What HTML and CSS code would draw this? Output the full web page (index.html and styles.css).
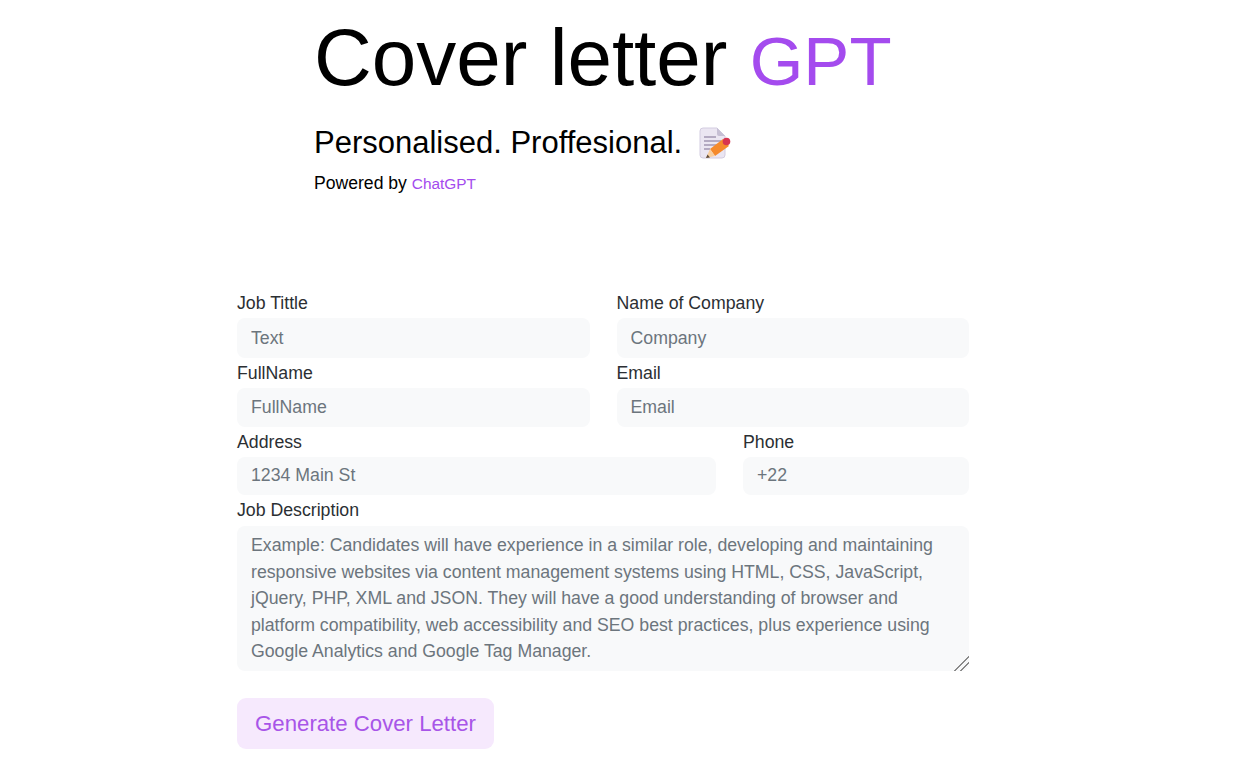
FILE: index.html
```html
<!DOCTYPE html>
<html lang="en">
<head>
    <meta charset="UTF-8">
    <meta name="viewport" content="width=device-width, initial-scale=1.0">
    <title>Cover letter GPT</title>
    <link rel="stylesheet" href="styles.css">
</head>
<body>
    <!-- Header -->
    <header class="hero">
        <h1>Cover letter <span class="accent">GPT</span></h1>
        <h2>Personalised. Proffesional.
            <svg class="memo" viewBox="0 0 32 32" width="32" height="32" aria-hidden="true">
                <path d="M1 4a3 3 0 0 1 3-3h14l8 8v19a3 3 0 0 1-3 3H4a3 3 0 0 1-3-3z" fill="#ebe6f2" stroke="#d3cce0" stroke-width="1"/>
                <path d="M18 1l8 8h-6a2 2 0 0 1-2-2z" fill="#c6bfd4"/>
                <path d="M5 10h12M5 14h17M5 18h13M5 22h6" stroke="#a297b3" stroke-width="1.3"/>
                <path d="M11 22L24 12l6 7-14 10z" fill="#f58a2c"/>
                <path d="M7 31l4-9 5 7z" fill="#f9cf9f"/>
                <path d="M7 31l1.5-3.500 2.500 3z" fill="#5d4a3a"/>
                <circle cx="27.500" cy="14.500" r="3.800" fill="#d8344f"/>
            </svg>
        </h2>
        <p class="powered">Powered by <span class="accent small">ChatGPT</span></p>
    </header>

    <!-- Form -->
    <form class="letter-form">
        <div class="form-row">
            <div class="field half">
                <label for="job">Job Tittle</label>
                <input type="text" id="job" class="tall" placeholder="Text">
            </div>
            <div class="field half">
                <label for="company">Name of Company</label>
                <input type="text" id="company" class="tall" placeholder="Company">
            </div>
        </div>
        <div class="form-row">
            <div class="field half">
                <label for="fullname">FullName</label>
                <input type="text" id="fullname" class="tall" placeholder="FullName">
            </div>
            <div class="field half">
                <label for="email">Email</label>
                <input type="text" id="email" class="tall" placeholder="Email">
            </div>
        </div>
        <div class="form-row">
            <div class="field wide">
                <label for="address">Address</label>
                <input type="text" id="address" class="short" placeholder="1234 Main St">
            </div>
            <div class="field narrow">
                <label for="phone">Phone</label>
                <input type="text" id="phone" class="short" placeholder="+22">
            </div>
        </div>
        <div class="field description">
            <label for="description">Job Description</label>
            <textarea id="description" placeholder="Example: Candidates will have experience in a similar role, developing and maintaining responsive websites via content management systems using HTML, CSS, JavaScript, jQuery, PHP, XML and JSON. They will have a good understanding of browser and platform compatibility, web accessibility and SEO best practices, plus experience using Google Analytics and Google Tag Manager."></textarea>
        </div>
        <button type="button" class="generate">Generate Cover Letter</button>
    </form>
</body>
</html>
```

FILE: styles.css
```css
* {
    margin: 0;
    padding: 0;
    box-sizing: border-box;
    font-family: "Liberation Sans", Arial, sans-serif;
}

body {
    background-color: #fff;
    color: #212529;
    height: 768px;
    overflow: hidden;
}

.hero {
    padding: 12px 0 0 314px;
    color: #000;
}

.hero h1 {
    font-size: 80px;
    font-weight: 400;
    line-height: 92px;
}

.hero h1 .accent {
    font-size: 69px;
}

.hero h2 {
    display: flex;
    align-items: center;
    gap: 17px;
    margin-top: 13px;
    font-size: 31px;
    font-weight: 400;
    line-height: 44px;
}

.memo {
    flex: none;
    margin-top: -1px;
}

.powered {
    margin-top: 5px;
    font-size: 17.6px;
    line-height: 26px;
}

.accent {
    color: #a44bee;
}

.small {
    font-size: 15.4px;
}

.letter-form {
    width: 732px;
    margin: 91px 0 0 237px;
}

.form-row {
    display: flex;
    gap: 27px;
}

.field {
    display: flex;
    flex-direction: column;
}

.half {
    flex: 1;
}

.wide {
    width: 479px;
}

.narrow {
    width: 226px;
}

label {
    font-size: 17.7px;
    line-height: 30px;
    color: #2b2f33;
}

.description label {
    margin-bottom: 1px;
}

input,
textarea {
    width: 100%;
    border: none;
    outline: none;
    border-radius: 8px;
    background-color: #f8f9fa;
    font-size: 17.72px;
    color: #6c757d;
    padding: 0 14px;
}

input.tall {
    height: 39.5px;
    padding-top: 1px;
}

input.short {
    height: 38px;
    padding-bottom: 1px;
}

textarea {
    height: 145px;
    padding-top: 6px;
    line-height: 26.6px;
}

textarea::-webkit-resizer {
    background: linear-gradient(135deg, transparent 0 48%, #8a8a8a 48% 55%, transparent 55% 68%, #8a8a8a 68% 75%, transparent 75%);
}

input::placeholder,
textarea::placeholder {
    color: #6c757d;
    opacity: 1;
}

.generate {
    display: block;
    width: 257px;
    height: 51px;
    margin-top: 27px;
    border: none;
    border-radius: 9px;
    background-color: #f6e9fd;
    color: #a855e8;
    font-size: 22.2px;
}
```
